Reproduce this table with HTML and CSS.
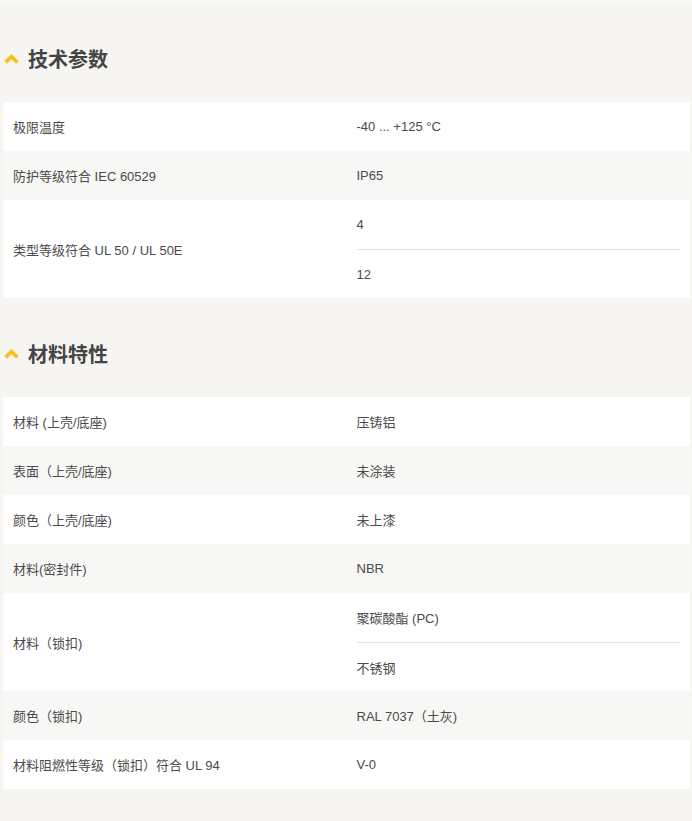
FILE: index.html
```html
<!DOCTYPE html>
<html lang="zh-CN">
<head>
    <meta charset="UTF-8">
    <meta name="viewport" content="width=device-width, initial-scale=1.0">
    <title>技术参数</title>
    <link rel="stylesheet" href="styles.css">
</head>
<body>
    <div class="page">
        <section class="spec-section">
            <h2 class="spec-title">
                <svg class="chevron" width="15" height="10" viewBox="0 0 15 10">
                    <path d="M1.6 8.4 L7.5 2.6 L13.4 8.4" fill="none" stroke="#f7c21b" stroke-width="3.6" stroke-linejoin="miter"/>
                </svg>
                技术参数
            </h2>
            <table class="spec-table">
                <tr>
                    <td class="spec-label">极限温度</td>
                    <td class="spec-value">-40 ... +125 °C</td>
                </tr>
                <tr>
                    <td class="spec-label">防护等级符合 IEC 60529</td>
                    <td class="spec-value">IP65</td>
                </tr>
                <tr>
                    <td class="spec-label">类型等级符合 UL 50 / UL 50E</td>
                    <td class="spec-value multi">
                        <div class="value-item">4</div>
                        <div class="value-item">12</div>
                    </td>
                </tr>
            </table>
        </section>

        <section class="spec-section">
            <h2 class="spec-title">
                <svg class="chevron" width="15" height="10" viewBox="0 0 15 10">
                    <path d="M1.6 8.4 L7.5 2.6 L13.4 8.4" fill="none" stroke="#f7c21b" stroke-width="3.6" stroke-linejoin="miter"/>
                </svg>
                材料特性
            </h2>
            <table class="spec-table">
                <tr>
                    <td class="spec-label">材料 (上壳/底座)</td>
                    <td class="spec-value">压铸铝</td>
                </tr>
                <tr>
                    <td class="spec-label">表面（上壳/底座)</td>
                    <td class="spec-value">未涂装</td>
                </tr>
                <tr>
                    <td class="spec-label">颜色（上壳/底座)</td>
                    <td class="spec-value">未上漆</td>
                </tr>
                <tr>
                    <td class="spec-label">材料(密封件)</td>
                    <td class="spec-value">NBR</td>
                </tr>
                <tr>
                    <td class="spec-label">材料（锁扣)</td>
                    <td class="spec-value multi">
                        <div class="value-item">聚碳酸酯 (PC)</div>
                        <div class="value-item">不锈钢</div>
                    </td>
                </tr>
                <tr>
                    <td class="spec-label">颜色（锁扣)</td>
                    <td class="spec-value">RAL 7037（土灰)</td>
                </tr>
                <tr>
                    <td class="spec-label">材料阻燃性等级（锁扣）符合 UL 94</td>
                    <td class="spec-value">V-0</td>
                </tr>
            </table>
        </section>
    </div>
</body>
</html>
```

FILE: styles.css
```css
body {
    margin: 0;
    background-color: #f6f5f2;
    font-family: 'Liberation Sans', 'Noto Sans CJK SC', sans-serif;
    color: #4a4a4a;
}

.page {
    padding: 0 2px 32px 3px;
    border-top: 3px solid #f9f9f8;
}

.spec-section {
    padding-top: 35px;
}

.spec-title {
    display: flex;
    align-items: center;
    gap: 9px;
    height: 40px;
    margin: 0 0 24px 1px;
    font-family: 'Noto Sans CJK SC', sans-serif;
    font-size: 20px;
    font-weight: 700;
    color: #444;
}

.chevron {
    display: block;
    margin-top: 1px;
}

.spec-table {
    width: 100%;
    border-collapse: collapse;
    table-layout: fixed;
    font-size: 13px;
}

.spec-table tr:nth-child(odd) {
    background-color: #fff;
}

.spec-table tr:nth-child(even) {
    background-color: #f7f7f5;
}

.spec-table td {
    height: 49px;
    padding: 0 10px;
    vertical-align: middle;
    box-sizing: border-box;
}

.value-item {
    display: flex;
    align-items: center;
    height: 49px;
    box-sizing: border-box;
}

.value-item + .value-item {
    border-top: 1px solid #e3e3e3;
}
```
